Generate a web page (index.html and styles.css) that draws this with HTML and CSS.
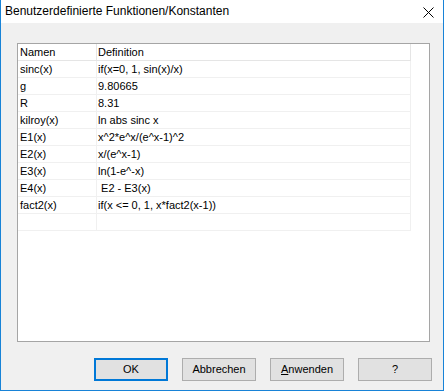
FILE: index.html
```html
<!DOCTYPE html>
<html lang="de">
<head>
    <meta charset="UTF-8">
    <title>Benutzerdefinierte Funktionen/Konstanten</title>
    <link rel="stylesheet" href="styles.css">
</head>
<body>
<div class="window">
    <div class="titlebar">
        <span class="title">Benutzerdefinierte Funktionen/Konstanten</span>
        <svg class="close" width="11" height="11" viewBox="0 0 11 11">
            <path d="M0.5 0.5 L10.5 10.5 M10.5 0.5 L0.5 10.5" stroke="#000" stroke-width="1" fill="none"/>
        </svg>
    </div>

    <div class="client">
        <div class="listbox">
            <div class="grid">
                <div class="cell head">Namen</div>
                <div class="cell head def">Definition</div>

                <div class="cell">sinc(x)</div>
                <div class="cell def">if(x=0, 1, sin(x)/x)</div>
                <div class="cell">g</div>
                <div class="cell def">9.80665</div>
                <div class="cell">R</div>
                <div class="cell def">8.31</div>
                <div class="cell">kilroy(x)</div>
                <div class="cell def">ln abs sinc x</div>
                <div class="cell">E1(x)</div>
                <div class="cell def">x^2*e^x/(e^x-1)^2</div>
                <div class="cell">E2(x)</div>
                <div class="cell def">x/(e^x-1)</div>
                <div class="cell">E3(x)</div>
                <div class="cell def">ln(1-e^-x)</div>
                <div class="cell">E4(x)</div>
                <div class="cell def"> E2 - E3(x)</div>
                <div class="cell">fact2(x)</div>
                <div class="cell def">if(x &lt;= 0, 1, x*fact2(x-1))</div>
                <div class="cell"></div>
                <div class="cell def"></div>
            </div>
        </div>

        <div class="buttons">
            <button class="btn default">OK</button>
            <button class="btn">Abbrechen</button>
            <button class="btn"><u>A</u>nwenden</button>
            <button class="btn">?</button>
        </div>
    </div>
</div>
</body>
</html>
```

FILE: styles.css
```css
* {
    box-sizing: border-box;
}

body {
    margin: 0;
    background: #f0f0f0;
}

.window {
    width: 444px;
    height: 391px;
    display: flex;
    flex-direction: column;
    border: 1px solid #1883d7;
    border-top: none;
    background: #f0f0f0;
}

.titlebar {
    height: 23px;
    background: #fff;
    display: flex;
    align-items: center;
    justify-content: space-between;
    padding: 0 9px 1px 4px;
}

.title {
    font-family: "Segoe UI", "Liberation Sans", sans-serif;
    font-size: 12px;
    color: #000;
}

.close {
    display: block;
    margin-top: 2px;
}

.client {
    flex: 1;
    display: flex;
    flex-direction: column;
    padding: 20px 11px 9px 16px;
}

.listbox {
    width: 413px;
    height: 299px;
    background: #fff;
    border: 1px solid #a5a5a5;
}

.grid {
    display: grid;
    grid-template-columns: 79px 314px;
    font-family: "Liberation Sans", Arial, sans-serif;
    font-size: 11px;
    color: #000;
}

.cell {
    height: 17px;
    line-height: 16px;
    padding-left: 2px;
    border-right: 1px solid #f0f0f0;
    border-bottom: 1px solid #f0f0f0;
    white-space: pre;
    overflow: hidden;
}

.cell.def {
    padding-left: 1px;
}

.cell.head {
    border-color: #e5e5e5;
}

.buttons {
    margin-top: 16px;
    display: flex;
    justify-content: flex-end;
    gap: 14px;
}

.btn {
    width: 74px;
    height: 23px;
    margin: 0;
    padding: 0 0 1px;
    background: #e1e1e1;
    border: 1px solid #adadad;
    border-radius: 0;
    font-family: "Liberation Sans", Arial, sans-serif;
    font-size: 11px;
    color: #000;
}

.btn.default {
    border: 2px solid #0078d7;
}
```
